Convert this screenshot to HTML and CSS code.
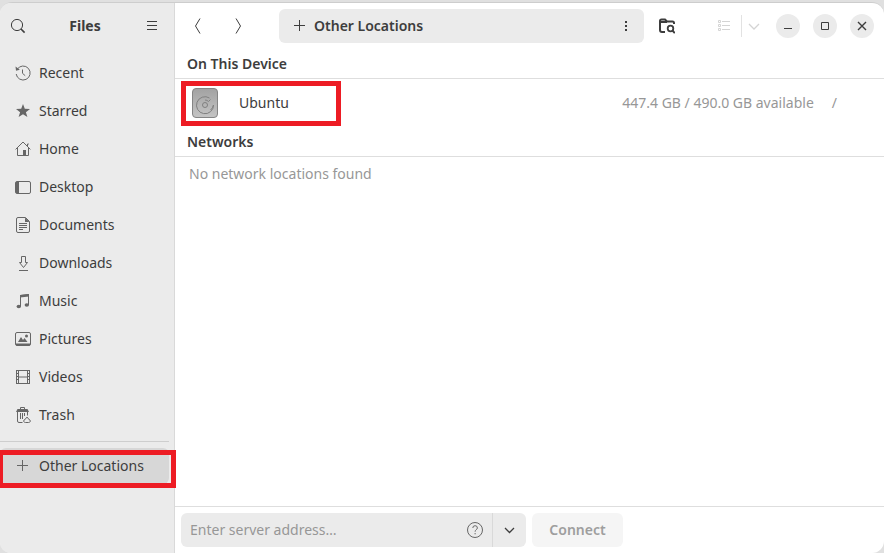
FILE: index.html
```html
<!DOCTYPE html>
<html lang="en">
<head>
<meta charset="utf-8">
<title>Files</title>
<link rel="stylesheet" href="styles.css">
</head>
<body>
<div class="window">
  <aside class="sidebar">
    <header class="sidebar-header">
      <button class="icon-button" aria-label="Search"><svg width="16" height="16" viewBox="0 0 16 16"><circle cx="7" cy="7" r="5.6"/><path d="M11 11l3.6 3.6" stroke-width="1.6"/></svg></button>
      <h1 class="title">Files</h1>
      <button class="icon-button" aria-label="Menu"><svg width="16" height="16" viewBox="0 0 16 16"><path d="M3 3.5h10M3 7.5h10M3 11.5h10"/></svg></button>
    </header>
    <nav class="places">
      <a class="place" href="#"><svg width="16" height="16" viewBox="0 0 16 16"><path d="M2.2 4.3A7 7 0 1 1 1.2 9M7.5 4.5v3.8l2.7 2.4"/><path class="solid" d="M.5 1.5l4.3 3.2-3.8 1z"/></svg>Recent</a>
      <a class="place" href="#"><svg width="16" height="16" viewBox="0 0 16 16"><path class="solid" d="M8 1l1.8 4.8 5.2.2-4.1 3.2L12.4 14 8 11.2 3.6 14l1.5-4.8L1 6l5.2-.2z"/></svg>Starred</a>
      <a class="place" href="#"><svg width="16" height="16" viewBox="0 0 16 16"><path d="M.6 8.4L8 1l7.4 7.4M2.5 7v7.5h11V7M12.5 5V3h1.3"/><path class="solid" d="M8 9h3v5.5H8z"/></svg>Home</a>
      <a class="place" href="#"><svg width="16" height="16" viewBox="0 0 16 16"><rect x=".5" y="2.5" width="15" height="12" rx="1.5"/><path class="solid" d="M1 3h3v11H1z"/></svg>Desktop</a>
      <a class="place" href="#"><svg width="16" height="16" viewBox="0 0 16 16"><path d="M3 .5h7.5l4 4V14a1.5 1.5 0 0 1-1.5 1.5H3A1.5 1.5 0 0 1 1.5 14V2A1.5 1.5 0 0 1 3 .5zM4 6.5h8M4 8.5h8M4 10.5h8M4 12.5h4"/><path class="solid" d="M10 .5V5h4.5z"/></svg>Documents</a>
      <a class="place" href="#"><svg width="16" height="16" viewBox="0 0 16 16"><path d="M6.500 1.500h4v6h2l-4 5-4-5h2zM4 15.500h9"/></svg>Downloads</a>
      <a class="place" href="#"><svg width="16" height="16" viewBox="0 0 16 16"><path d="M5.500 13.500V2.500L13.500 1.500v10.500"/><path class="solid" d="M5 2l9-1v2.500l-9 1z"/><ellipse class="solid" cx="3.800" cy="13.500" rx="2.200" ry="1.800"/><ellipse class="solid" cx="11.800" cy="12" rx="2.200" ry="1.800"/></svg>Music</a>
      <a class="place" href="#"><svg width="16" height="16" viewBox="0 0 16 16"><rect x=".5" y="1.500" width="15" height="13" rx="1.500"/><path class="solid" d="M1 12.500h14v2H1zM3 11l3-5 2 3 1.500-2 3 4z"/><circle class="solid" cx="11.500" cy="5" r="1.500"/></svg>Pictures</a>
      <a class="place" href="#"><svg width="16" height="16" viewBox="0 0 16 16"><path d="M3.500 1.500h9v13h-9zM3.500 8h9M1.500 1v14M14.500 1v14M1 1.500h3M1 4.500h3M1 7.500h3M1 10.500h3M1 14.500h3M12 1.500h3M12 4.500h3M12 7.500h3M12 10.500h3M12 14.500h3"/></svg>Videos</a>
      <a class="place" href="#"><svg width="16" height="16" viewBox="0 0 16 16"><path d="M5.500 2.500v-2h4v2M2.500 5v9q0 1.500 1.500 1.500h3.500M12.500 5v3.500M5.500 6v6M7.500 6v6M9.500 6v3"/><path class="solid" d="M2.500 2h10L14 5H1z"/><path d="M11.300 10.500h1.500M12 10.500c1 1.500 3.300 2 3.300 3.500 0 1-.8 1.500-1.800 1.500h-3c-1 0-1.800-.5-1.800-1.500 0-1.500 2.300-2 3.300-3.500z"/></svg>Trash</a>
      <hr class="divider">
      <a class="place selected" href="#" aria-current="page"><svg width="16" height="16" viewBox="0 0 16 16"><path d="M7.500 2v11M2 7.500h11"/></svg>Other Locations<span class="highlight highlight-place"></span></a>
    </nav>
  </aside>
  <main class="content">
    <header class="toolbar">
      <button class="icon-button" aria-label="Back"><svg width="16" height="16" viewBox="0 0 16 16"><path d="M10 .5L5.500 8l4.500 7.500"/></svg></button>
      <button class="icon-button" aria-label="Forward"><svg width="16" height="16" viewBox="0 0 16 16"><path d="M6 .5L10.500 8 6 15.500"/></svg></button>
      <div class="pathbar">
        <svg width="16" height="16" viewBox="0 0 16 16"><path d="M8.500 2v11M3 7.500h11"/></svg>
        <span class="path-name">Other Locations</span>
        <button class="icon-button" aria-label="Location options"><svg width="16" height="16" viewBox="0 0 16 16"><path class="solid" d="M6 3h2v2H6zM6 7h2v2H6zM6 11h2v2H6z"/></svg></button>
      </div>
      <button class="icon-button" aria-label="Search everywhere"><svg width="16" height="16" viewBox="0 0 16 16"><path d="M6 14H3q-2 0-2-2V3q0-1.500 1.500-1.500H6L8 3.500h5.500Q15 3.500 15 5v1M1 4h7" stroke-width="2"/><circle cx="11.500" cy="10.500" r="2.800" stroke-width="1.800"/><path d="M13.500 12.500l2.300 2.700" stroke-width="2"/></svg></button>
      <div class="view-switch">
        <button class="icon-button" aria-label="List view" disabled><svg width="16" height="16" viewBox="0 0 16 16"><path d="M2.500 2.500h2v2h-2zM2.500 6.500h2v2h-2zM2.500 10.500h2v2h-2zM6 3.500h8M6 7.500h8M6 11.500h8"/></svg></button>
        <button class="icon-button view-options" aria-label="View options" disabled><svg width="16" height="16" viewBox="0 0 16 16"><path d="M3 6l5 5 5-5" stroke-width="1.300"/></svg></button>
      </div>
      <div class="window-controls">
        <button class="control" aria-label="Minimize"><svg width="16" height="16" viewBox="0 0 16 16"><path d="M4 10.500h8"/></svg></button>
        <button class="control" aria-label="Maximize"><svg width="16" height="16" viewBox="0 0 16 16"><path d="M4.500 4.500h7v7h-7z"/></svg></button>
        <button class="control" aria-label="Close"><svg width="16" height="16" viewBox="0 0 16 16"><path d="M4 4l8 8M12 4l-8 8" stroke-width="1.400"/></svg></button>
      </div>
    </header>
    <section class="group">
      <h2 class="group-title">On This Device</h2>
      <div class="device">
        <svg class="disk" width="28" height="32" viewBox="0 0 28 32">
          <defs><linearGradient id="metal" x1="0" y1="0" x2="0" y2="1"><stop offset="0" stop-color="#a2a2a2"/><stop offset="1" stop-color="#c4c4c4"/></linearGradient></defs>
          <rect x="1.500" y="1.500" width="25" height="29" rx="3.500" fill="url(#metal)" stroke="#858585"/>
          <path d="M18.500 11a8.500 8.500 0 1 0 4 7M14 13a5 5 0 0 1 3.500 1.500L19.500 12.500M22.500 18q-.5 3-3 5" stroke="#808080"/>
          <circle cx="14" cy="18" r="2.500" stroke="#808080"/>
        </svg>
        <span class="device-name">Ubuntu</span>
        <span class="device-space">447.4 GB / 490.0 GB available</span>
        <span class="device-path">/</span>
        <span class="highlight highlight-device"></span>
      </div>
    </section>
    <section class="group">
      <h2 class="group-title">Networks</h2>
      <p class="empty">No network locations found</p>
    </section>
    <form class="connect-bar">
      <div class="address">
        <input class="address-input" type="text" aria-label="Server address" placeholder="Enter server address…">
        <button class="icon-button" type="button" aria-label="Help"><svg width="16" height="16" viewBox="0 0 16 16"><circle cx="8" cy="8" r="7.500"/><path d="M5.800 6q0-2.300 2.300-2.300T10.400 6c0 1.500-2.300 1.700-2.300 3.700M8.100 11v1.300"/></svg></button>
        <button class="icon-button address-menu" type="button" aria-label="Recent servers"><svg width="16" height="16" viewBox="0 0 16 16"><path d="M3 6l4.500 4.500L12 6" stroke-width="1.300"/></svg></button>
      </div>
      <button class="connect" type="submit" disabled>Connect</button>
    </form>
  </main>
</div>
</body>
</html>
```
FILE: styles.css
```css
* { box-sizing: border-box; }
body {
  margin: 0;
  background: #e0e0e0;
  color: #3d3d3d;
  font: 14px/20px "Noto Sans", sans-serif;
}
svg { display: block; flex: none; fill: none; stroke: currentColor; }
.solid { fill: currentColor; stroke: none; }
button, input { font: inherit; color: inherit; border: 0; padding: 0; background: none; }
h1, h2, p { margin: 0; font-size: inherit; }

.window {
  display: grid;
  grid-template-columns: 175px 1fr;
  min-height: calc(100vh - 2px);
  margin-top: 2px;
  border-top: 1px solid #cdcdcd;
  border-radius: 12px;
  background: #fff;
}
.sidebar {
  background: #ebebeb;
  border-right: 1px solid #d9d9d9;
  border-radius: 10px 0 0 10px;
}
.sidebar-header { display: flex; align-items: center; height: 46px; padding: 0 5px 0 1px; }
.title { flex: 1; text-align: center; font-weight: 700; }
.icon-button { display: grid; place-items: center; flex: none; width: 34px; height: 34px; }

.places { display: flex; flex-direction: column; gap: 2px; padding: 6px 5px 0 0; }
.place {
  position: relative;
  display: flex;
  align-items: center;
  gap: 8px;
  height: 36px;
  padding-left: 15px;
  border-radius: 6px;
  color: inherit;
  text-decoration: none;
}
.place svg { color: #666; }
.selected { background: #d7d7d7; }
.divider { width: 100%; height: 1px; margin: 6px 0 4px; border: 0; background: #cecece; }

.highlight { position: absolute; border: 5px solid #ed1c24; pointer-events: none; }
.highlight-place { inset: 2px -7px -4px 0; border-left-width: 3px; }
.highlight-device { top: 2px; bottom: 1px; left: 6px; width: 160px; }

.content { display: flex; flex-direction: column; min-width: 0; }
.toolbar { display: flex; align-items: center; gap: 6px; height: 46px; padding: 0 10px 0 6px; }
.pathbar {
  display: flex;
  align-items: center;
  flex: 1;
  height: 34px;
  margin-left: 18px;
  padding-left: 12px;
  border-radius: 6px;
  background: #ebebeb;
}
.path-name { flex: 1; padding-left: 7px; font-weight: 600; }
.view-switch { display: flex; align-items: center; margin-left: 17px; color: #d4d4d4; }
.view-options { width: 24px; height: 22px; border-left: 1px solid #e2e2e2; }
.window-controls { display: flex; gap: 13px; margin-left: 5px; }
.control {
  display: grid;
  place-items: center;
  width: 24px;
  height: 24px;
  border-radius: 50%;
  background: #ebebeb;
}

.group-title {
  height: 30px;
  padding: 5px 12px 0;
  border-bottom: 1px solid #dedede;
  font-weight: 600;
}
.device { position: relative; display: flex; align-items: center; height: 48px; padding: 0 47px 0 16px; }
.device-name { flex: 1; padding-left: 20px; }
.device-space, .device-path, .empty { color: #979797; }
.device-path { padding-left: 18px; }
.empty { padding: 7px 14px; }

.connect-bar {
  display: flex;
  gap: 6px;
  margin-top: auto;
  padding: 6px;
  border-top: 1px solid #dedede;
}
.address { display: flex; width: 345px; border-radius: 6px; background: #ebebeb; color: #666; }
.address-input { flex: 1; min-width: 0; padding-left: 9px; outline: 0; }
.address-input::placeholder { color: #979797; opacity: 1; }
.address-menu { border-left: 1px solid #d9d9d9; color: #3d3d3d; }
.connect { width: 91px; height: 34px; border-radius: 6px; background: #f5f5f5; color: #9e9e9e; font-weight: 600; }
```
